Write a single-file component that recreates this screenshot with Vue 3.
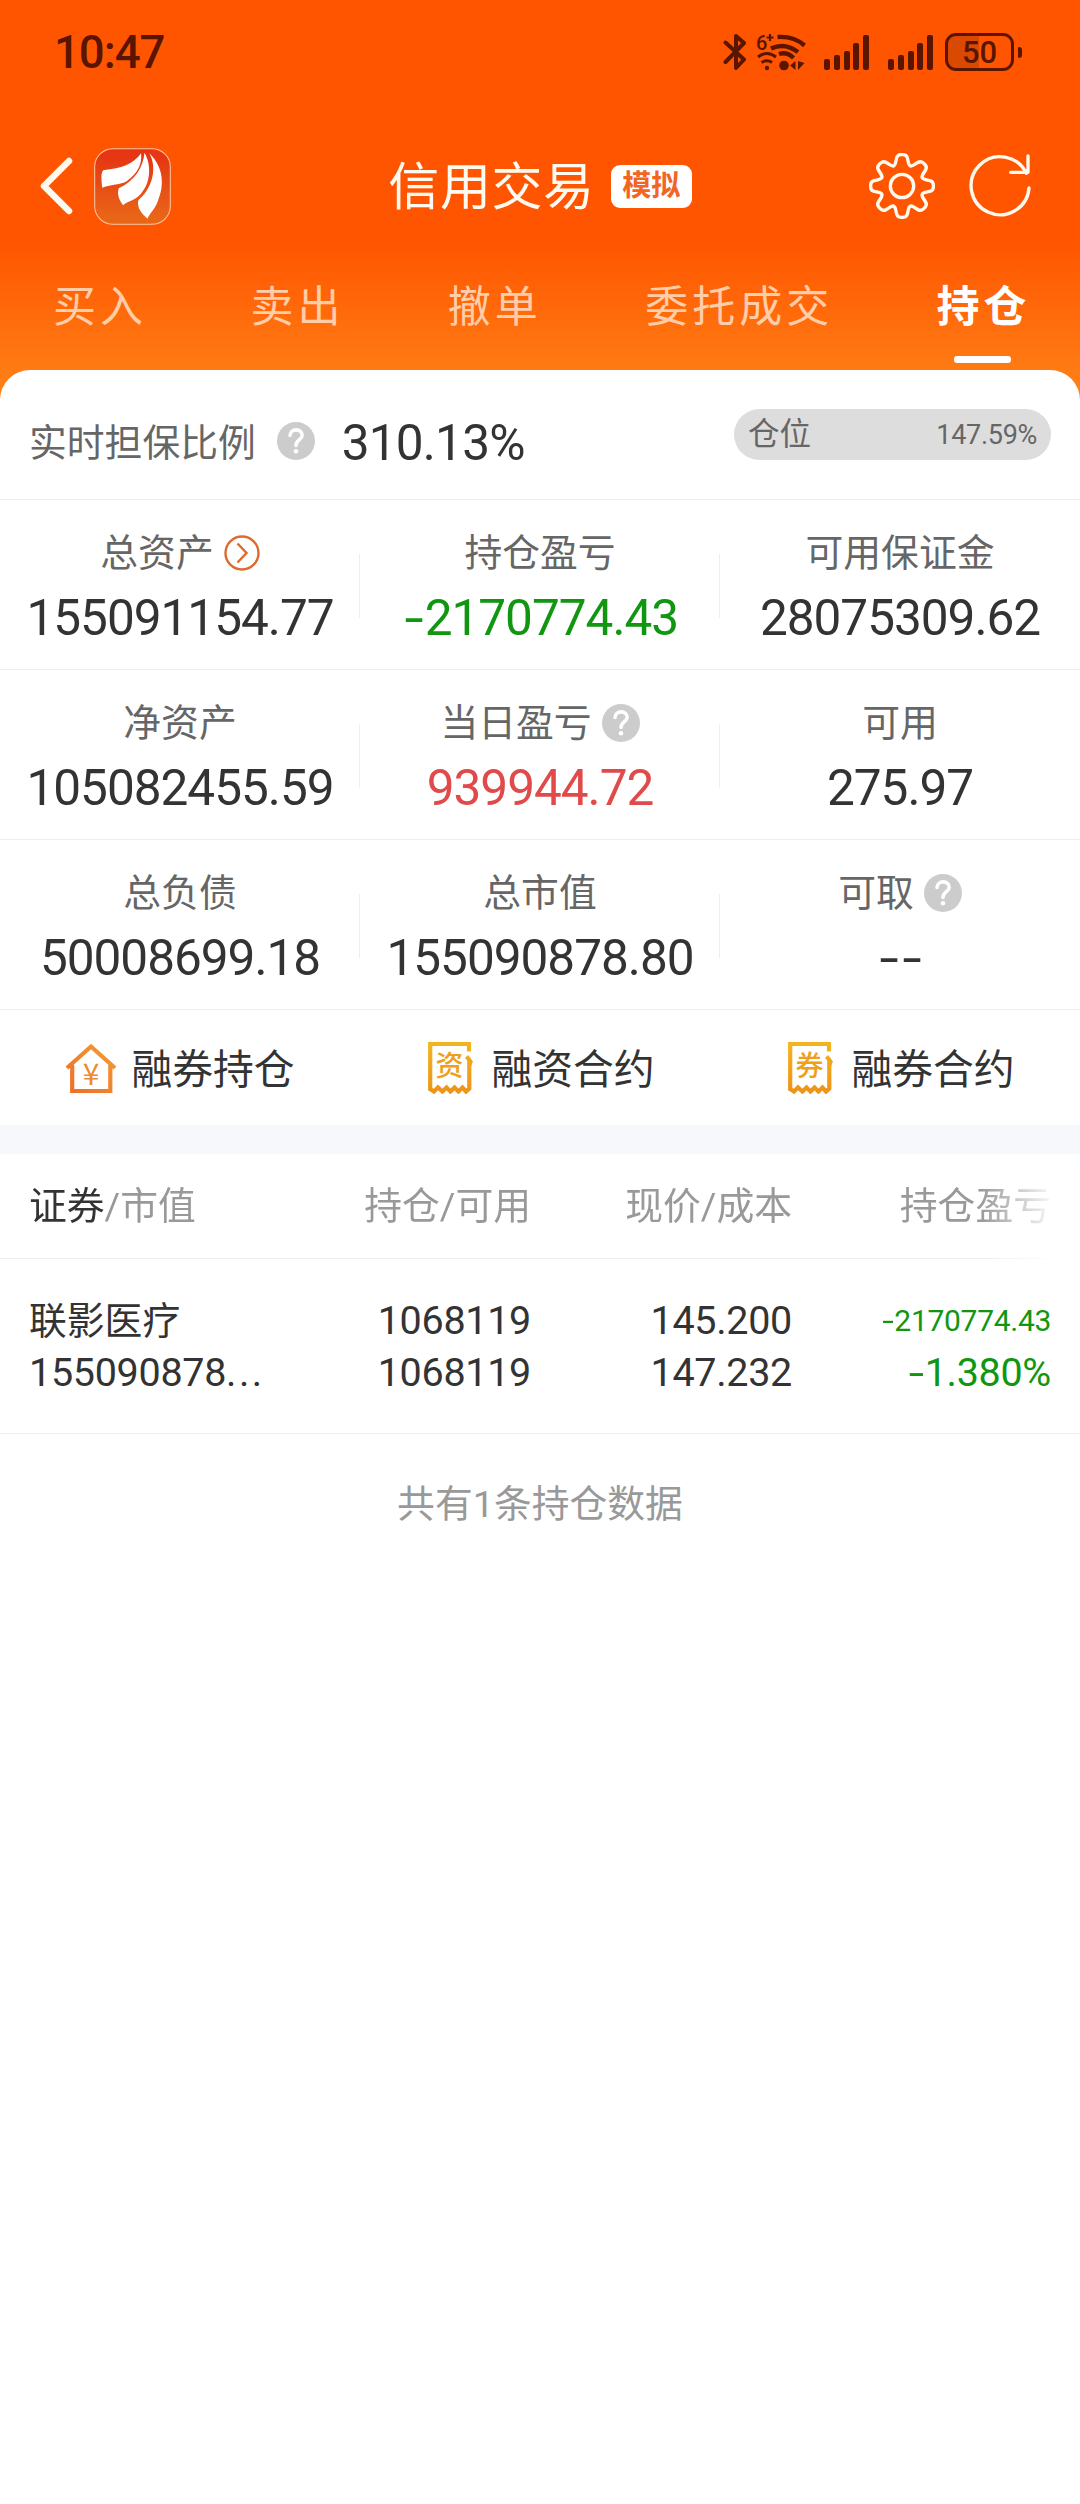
<script setup>
import { ref } from "vue";

const tabs = ["买入", "卖出", "撤单", "委托成交", "持仓"];
const activeTab = ref("持仓");

const rows = [
	[
		{ label: "总资产", value: "155091154.77", icon: "arrow" },
		{ label: "持仓盈亏", value: "-2170774.43", color: "green" },
		{ label: "可用保证金", value: "28075309.62" },
	],
	[
		{ label: "净资产", value: "105082455.59" },
		{ label: "当日盈亏", value: "939944.72", color: "red", icon: "help" },
		{ label: "可用", value: "275.97" },
	],
	[
		{ label: "总负债", value: "50008699.18" },
		{ label: "总市值", value: "155090878.80" },
		{ label: "可取", value: "--", icon: "help" },
	],
];

const actions = [
	{ label: "融券持仓", icon: "house" },
	{ label: "融资合约", icon: "资" },
	{ label: "融券合约", icon: "券" },
];

const holdings = [
	{
		name: "联影医疗",
		marketValue: "155090878",
		amount: "1068119",
		available: "1068119",
		price: "145.200",
		cost: "147.232",
		profit: "-2170774.43",
		rate: "-1.380%",
	},
];

const signalBars = [11, 14.5, 19, 26.5, 35];

// split the leading minus signs off, they are drawn wider than the font's own
function signOf(value) {
	return value.match(/^-*/)[0].split("");
}

function digitsOf(value) {
	return value.replace(/^-+/, "");
}

// eight teeth with rounded corners
function gearPath() {
	const tooth = [
		[-21, -62],
		[-14, -94],
		[14, -94],
		[21, -62],
	];
	const points = [];
	for (let i = 0; i < 8; i++) {
		const a = (i * Math.PI) / 4;
		for (const [x, y] of tooth) {
			points.push([
				x * Math.cos(a) - y * Math.sin(a),
				x * Math.sin(a) + y * Math.cos(a),
			]);
		}
	}
	const toward = (p, q, r) => {
		const d = Math.hypot(q[0] - p[0], q[1] - p[1]);
		const t = Math.min(r / d, 0.5);
		return `${p[0] + (q[0] - p[0]) * t} ${p[1] + (q[1] - p[1]) * t}`;
	};
	const n = points.length;
	return (
		points
			.map((p, i) => {
				const prev = points[(i + n - 1) % n];
				const next = points[(i + 1) % n];
				return `${i ? "L" : "M"}${toward(p, prev, 11)}Q${p[0]} ${p[1]} ${toward(p, next, 11)}`;
			})
			.join("") + "Z"
	);
}
</script>

<template>
	<main class="page">
		<header>
			<div class="status-bar">
				<span class="time">10:47</span>
				<div class="status-icons">
					<svg class="bluetooth" viewBox="0 0 24 38">
						<path d="M2.5 9.5 L21 26.5 L13 35 V23 M2.5 29 L21 10 L13 3 V17" />
					</svg>
					<svg class="wifi" viewBox="0 0 52 38">
						<text x="0" y="16.500">6</text>
						<path class="plus" d="M10.500 4.500h7M14 1v7" />
						<path d="M21.500 4 Q38 3 48.500 12.500" />
						<path d="M15 15.500 Q29 9 42 19" />
						<path d="M23 21 Q31 18.500 37.500 25" />
						<path class="thin" d="M2 24 Q11 17 20 24 M5.500 29.500 Q11 26 16 29.500" />
						<circle cx="28" cy="32.500" r="4.800" />
						<circle cx="11" cy="35" r="2.200" />
						<path class="solid" d="M34 32.500 L39.500 28 V37 Z M42 28 V37 L48.500 30 Z" />
					</svg>
					<div v-for="n in 2" :key="n" class="signal">
						<i v-for="h in signalBars" :key="h" :style="{ height: h + 'px' }"></i>
					</div>
					<div class="battery"><span>50</span></div>
				</div>
			</div>

			<nav class="title-bar">
				<div class="left">
					<svg class="back" viewBox="0 0 34 58">
						<path d="M30 4 L5 29 L30 54" />
					</svg>
					<svg class="logo" viewBox="273 441 224 231" preserveAspectRatio="none">
						<defs>
							<linearGradient id="logo-bg" x2="0" y2="1">
								<stop offset="0.100" stop-color="#e63613" />
								<stop offset="0.900" stop-color="#e96518" />
							</linearGradient>
						</defs>
						<rect x="275" y="443" width="220" height="227" rx="54" fill="url(#logo-bg)" stroke="#f8c8a0" stroke-width="3" />
						<path d="M410 457C388 490 350 503 303 507Q290 508 297 560C325 550 350 552 368 541C402 515 413 490 410 457Z" />
						<path d="M420 455C415 500 393 538 345 562C339 580 347 600 358 613C370 600 388 600 402 586C438 552 442 495 420 455Z" />
						<path d="M434 457C457 500 445 560 402 598C397 620 412 640 429 653C435 635 450 625 458 602C478 555 477 500 434 457Z" />
					</svg>
				</div>
				<div class="title">
					<h1>信用交易</h1>
					<span class="badge">模拟</span>
				</div>
				<div class="right">
					<svg class="gear" viewBox="-99 -99 198 198">
						<path :d="gearPath()" />
						<circle r="35" />
					</svg>
					<svg class="refresh" viewBox="-96 -96 192 192">
						<path d="M87 6A87 87 0 1 1 79 -38M84 -90V-41H32" />
					</svg>
				</div>
			</nav>

			<div class="tabs">
				<span
					v-for="tab in tabs"
					:key="tab"
					class="tab"
					:class="{ active: tab === activeTab }"
					@click="activeTab = tab"
				>{{ tab }}</span>
			</div>
		</header>

		<section class="sheet">
			<div class="ratio">
				<span class="label">实时担保比例</span>
				<svg class="help" viewBox="0 0 38 38">
					<circle cx="19" cy="19" r="19" />
					<path d="M13 13.500C13 6 25.500 6 25.200 13.500C25 18 19 17.500 19 23.500" />
					<circle class="dot" cx="19" cy="29.300" r="2.300" />
				</svg>
				<span class="value">310.13%</span>
				<div class="position"><span>仓位</span><b>147.59%</b></div>
			</div>

			<div v-for="(row, i) in rows" :key="i" class="stats">
				<div v-for="item in row" :key="item.label" class="stat">
					<div class="label">
						{{ item.label }}
						<svg v-if="item.icon === 'arrow'" class="more" viewBox="0 0 36 36">
							<circle cx="18" cy="18" r="16.500" />
							<path d="M13.500 8.500L22.500 18L13.500 27.500" />
						</svg>
						<svg v-if="item.icon === 'help'" class="help" viewBox="0 0 38 38">
							<circle cx="19" cy="19" r="19" />
							<path d="M13 13.500C13 6 25.500 6 25.200 13.500C25 18 19 17.500 19 23.500" />
							<circle class="dot" cx="19" cy="29.300" r="2.300" />
						</svg>
					</div>
					<div class="value" :class="item.color"><i v-for="(s, k) in signOf(item.value)" :key="k" class="sign">{{ s }}</i>{{ digitsOf(item.value) }}</div>
				</div>
			</div>

			<div class="actions">
				<div v-for="action in actions" :key="action.label" class="action">
					<svg v-if="action.icon === 'house'" class="house" viewBox="0 0 52 52">
						<defs>
							<linearGradient id="house-line" x1="0" y1="1" x2="1" y2="0">
								<stop offset="0" stop-color="#ec6f28" />
								<stop offset="1" stop-color="#f59b33" />
							</linearGradient>
						</defs>
						<path d="M2 26L26 4.500L50 26M7.200 23V49H45.300V23" stroke="url(#house-line)" />
						<text x="26" y="42.500" fill="#f08a2c">¥</text>
					</svg>
					<svg v-else class="receipt" viewBox="0 0 52 52">
						<defs>
							<linearGradient id="receipt-line" x2="0" y2="1">
								<stop offset="0" stop-color="#f2b51f" />
								<stop offset="1" stop-color="#ee9417" />
							</linearGradient>
						</defs>
						<path d="M44 9.500V2H5.200V47L9 49.500L13 45.500L17.500 49.500L21.500 45.500L25.500 49.500L29.500 45.500L33.500 49.500L37.500 45.500L41 49.500L44.300 46.500V18L41.500 14.500" stroke="url(#receipt-line)" />
						<path class="tip" d="M42 13L48 19.500L46 24L44 18Z" />
						<text x="24.500" y="34">{{ action.icon }}</text>
					</svg>
					<span>{{ action.label }}</span>
				</div>
			</div>
		</section>

		<section class="holdings">
			<div class="table-head">
				<span><b>证券</b>/市值</span>
				<span>持仓/可用</span>
				<span>现价/成本</span>
				<span>持仓盈亏</span>
			</div>
			<div v-for="item in holdings" :key="item.name" class="holding">
				<div>
					<p class="name">{{ item.name }}</p>
					<p class="market">{{ item.marketValue }}<span class="dots">...</span></p>
				</div>
				<div>
					<p>{{ item.amount }}</p>
					<p>{{ item.available }}</p>
				</div>
				<div>
					<p>{{ item.price }}</p>
					<p>{{ item.cost }}</p>
				</div>
				<div class="green">
					<p class="small"><i class="sign">-</i>{{ digitsOf(item.profit) }}</p>
					<p><i class="sign">-</i>{{ digitsOf(item.rate) }}</p>
				</div>
			</div>
			<p class="total">共有{{ holdings.length }}条持仓数据</p>
		</section>
	</main>
</template>

<style>
body {
	margin: 0;
	background: #fff;
}
</style>

<style scoped>
.page {
	width: 1080px;
	min-height: 2504px;
	background: #fff linear-gradient(#ff5500 240px, #ff8519 405px) no-repeat 0 0 / 100% 420px;
	font-family: Roboto, "Noto Sans CJK SC", sans-serif;
	color: #333;
}

h1,
p {
	margin: 0;
}

i {
	font-style: normal;
}

svg {
	display: block;
	flex: none;
	fill: none;
}

header {
	height: 370px;
}

.status-bar {
	height: 104px;
	box-sizing: border-box;
	padding: 0 58px 0 54px;
	display: flex;
	align-items: center;
	justify-content: space-between;
	color: #5a1500;
}

.time {
	font-size: 45.500px;
	font-weight: 500;
	letter-spacing: -1px;
	line-height: 104px;
	padding-top: 2px;
}

.status-icons {
	display: flex;
	align-items: center;
}

.bluetooth {
	width: 24px;
	height: 38px;
	margin-right: 9px;
	stroke: #5a1500;
	stroke-width: 4;
	stroke-linecap: round;
	stroke-linejoin: round;
}

.wifi {
	width: 52px;
	height: 38px;
	margin-right: 16px;
	overflow: visible;
	fill: #5a1500;
}

.wifi path {
	fill: none;
	stroke: #5a1500;
	stroke-width: 4.4;
}

.wifi .thin {
	stroke-width: 3;
}

.wifi .plus {
	stroke-width: 2.2;
}

.wifi .solid {
	fill: #5a1500;
	stroke: none;
}

.wifi text {
	font-size: 20px;
	font-weight: 500;
}

.signal {
	width: 45px;
	height: 35px;
	margin-right: 19px;
	display: flex;
	align-items: flex-end;
	justify-content: space-between;
}

.signal + .battery {
	margin-left: -7px;
}

.signal i {
	width: 6px;
	border-radius: 2px;
	background: #5a1500;
}

.battery {
	position: relative;
	width: 69px;
	height: 38px;
	margin-right: 8px;
	box-sizing: border-box;
	border: 3px solid #5a1500;
	border-radius: 11px;
	background: linear-gradient(90deg, #da4900 50%, transparent 50%);
	text-align: center;
	font-size: 31px;
	font-weight: 500;
	line-height: 34px;
}

.battery::after {
	content: "";
	position: absolute;
	right: -11px;
	top: 11px;
	width: 4px;
	height: 11px;
	border-radius: 1px 3px 3px 1px;
	background: #5a1500;
}

.title-bar {
	height: 164px;
	display: grid;
	grid-template-columns: 1fr auto 1fr;
	align-items: center;
}

.left,
.right,
.title {
	display: flex;
	align-items: center;
}

.left {
	padding-left: 39px;
}

.back {
	width: 34px;
	height: 58px;
	margin-right: 21px;
	stroke: #fffaf0;
	stroke-width: 6.5;
	stroke-linecap: round;
	stroke-linejoin: round;
}

.logo {
	width: 77px;
	height: 77px;
}

.logo path {
	fill: #fff;
}

.title {
	gap: 16px;
	color: #fffaf0;
}

h1 {
	padding-top: 4px;
	font-size: 51px;
	font-weight: 400;
	letter-spacing: 0.6px;
	line-height: 76px;
}

.badge {
	width: 81px;
	height: 43px;
	border-radius: 9px;
	background: #fff;
	color: #f26522;
	font-size: 29px;
	font-weight: 700;
	line-height: 42px;
	text-align: center;
}

.right {
	justify-content: flex-end;
	padding-right: 48px;
}

.gear {
	width: 66px;
	height: 66px;
	margin-right: 33px;
	stroke: #fffaf0;
	stroke-width: 10;
}

.refresh {
	width: 64px;
	height: 64px;
	stroke: #fffaf0;
	stroke-width: 10;
	stroke-linecap: round;
	stroke-linejoin: round;
}

.tabs {
	display: flex;
	gap: 103.400px;
	height: 95px;
	padding-left: 53px;
}

.tab {
	position: relative;
	color: #ffcda8;
	font-size: 43px;
	letter-spacing: 4px;
	line-height: 79px;
	white-space: nowrap;
}

.tab.active {
	color: #fff;
	font-weight: 700;
}

.tab.active::after {
	content: "";
	position: absolute;
	left: 17px;
	bottom: 0;
	width: 57px;
	height: 7px;
	border-radius: 3px;
	background: #fff;
}

.sheet {
	background: #fff;
	border-radius: 30px 30px 0 0;
	border-bottom: 29px solid #f6f8fb;
}

.label {
	font-size: 37.800px;
	color: #666;
}

.value {
	font-size: 49.500px;
	letter-spacing: -1px;
	color: #333;
}

.value.green,
.green {
	color: #119611;
}

.value.red {
	color: #e04a4a;
}

.sign {
	display: inline-block;
	width: 0.46em;
	text-align: center;
	transform: scaleX(1.4);
}

.help {
	width: 38px;
	height: 38px;
	stroke: #fff;
	stroke-width: 3.6;
	stroke-linecap: round;
}

.help circle {
	fill: #ccc;
	stroke: none;
}

.help .dot {
	fill: #fff;
}

.ratio {
	height: 130px;
	box-sizing: border-box;
	padding: 0 29px;
	display: flex;
	align-items: center;
	border-bottom: 1px solid #eee;
}

.ratio > .label {
	margin-top: 9px;
}

.ratio > .help {
	margin: 13px 27px 0 21px;
}

.ratio > .value {
	margin-top: 17px;
	letter-spacing: -0.8px;
}

.position {
	width: 317px;
	height: 51px;
	box-sizing: border-box;
	margin-left: auto;
	padding: 0 14px;
	display: flex;
	align-items: center;
	justify-content: space-between;
	border-radius: 26px;
	background: #ddd;
	color: #666;
	font-size: 31.500px;
	line-height: 48px;
}

.position b {
	font-size: 27px;
	font-weight: 400;
	letter-spacing: -0.3px;
}

.stats {
	display: flex;
	height: 169px;
	border-bottom: 1px solid #eee;
}

.stat {
	position: relative;
	width: 360px;
	padding-top: 25px;
	text-align: center;
}

.stat:not(:last-child)::after {
	content: "";
	position: absolute;
	right: 0;
	top: 54px;
	width: 1px;
	height: 64px;
	background: #eee;
}

.stat .label {
	display: flex;
	align-items: center;
	justify-content: center;
	gap: 10px;
	height: 56px;
	line-height: 56px;
}

.stat .value {
	line-height: 74px;
}

.more {
	width: 36px;
	height: 36px;
	stroke: #dd6a30;
	stroke-width: 2.4;
}

.actions {
	display: flex;
	height: 115px;
}

.action {
	width: 360px;
	display: flex;
	align-items: center;
	justify-content: center;
	gap: 14px;
	font-size: 40.800px;
}

.action span {
	padding-bottom: 3px;
}

.action svg {
	width: 52px;
	height: 52px;
	stroke-width: 4.2;
}

.action text {
	text-anchor: middle;
	font-family: "Noto Sans CJK SC", sans-serif;
	font-size: 30px;
}

.receipt text {
	font-size: 28px;
	fill: #eea01b;
	font-weight: 500;
}

.receipt .tip {
	fill: #f0a51b;
}

.table-head,
.holding {
	display: grid;
	grid-template-columns: 241px 261px 261px 259px;
	padding: 0 29px;
	text-align: right;
}

.table-head {
	height: 104px;
	line-height: 105px;
	font-size: 37.800px;
	color: #999;
	border-bottom: 1px solid #eee;
	-webkit-mask-image: linear-gradient(90deg, #000 980px, transparent 1058px);
	mask-image: linear-gradient(90deg, #000 980px, transparent 1058px);
}

.table-head b {
	color: #333;
	font-weight: 400;
}

.table-head span:first-child,
.holding div:first-child {
	text-align: left;
}

.holding {
	height: 138px;
	padding-top: 36px;
	border-bottom: 1px solid #eee;
	font-size: 39.500px;
	letter-spacing: -0.3px;
}

.holding p {
	height: 52px;
	line-height: 52px;
	white-space: nowrap;
}

.holding .name {
	font-size: 37.800px;
	letter-spacing: 0;
}

.holding .small {
	font-size: 30px;
}

.dots {
	letter-spacing: 2.4px;
}

.total {
	padding-top: 42px;
	text-align: center;
	font-size: 37.800px;
	line-height: 56px;
	color: #999;
}
</style>
